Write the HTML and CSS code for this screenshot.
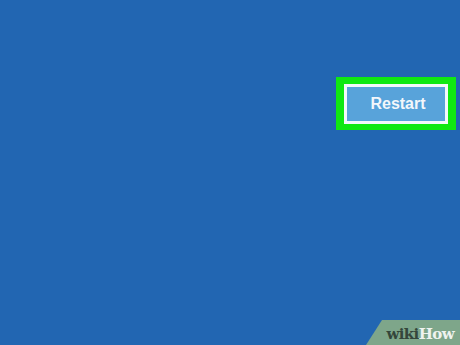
FILE: index.html
```html
<!DOCTYPE html>
<html>
<head>
<meta charset="utf-8">
<link rel="stylesheet" href="styles.css">
</head>
<body>
<div class="screen">
  <div class="row">
    <div class="highlight">
      <div class="btn">Restart</div>
    </div>
  </div>
  <div class="wm"><span class="wiki">wiki</span><span class="how">How</span></div>
</div>
</body>
</html>
```
FILE: styles.css
```css
html, body { margin: 0; padding: 0; }
body { width: 460px; height: 345px; overflow: hidden; background: #2266b2; }
.screen { position: relative; width: 460px; height: 345px; background: #2266b2; }
.row { display: flex; justify-content: flex-end; padding-top: 77px; padding-right: 4px; }
.highlight {
  width: 120px; height: 53px; box-sizing: border-box;
  background: #10e812; padding: 7px 8px 6px 8px;
}
.btn {
  height: 100%; box-sizing: border-box;
  border: 3px solid #f4f8fb; background: #58a3da;
  display: flex; align-items: center; justify-content: center;
  color: #f3f7fb; font-family: "Liberation Sans", Arial, sans-serif;
  font-weight: bold; font-size: 16px; padding-left: 4px;
}
.wm {
  position: absolute; left: 366px; top: 320px; width: 94px; height: 25px;
  background: #7ea68a;
  clip-path: polygon(16px 0, 94px 0, 94px 25px, 0 25px);
  display: flex; align-items: center; justify-content: flex-end; padding-right: 6px; padding-top: 3px; box-sizing: border-box;
  font-family: "DejaVu Serif", serif; font-weight: bold; font-size: 15px; letter-spacing: -0.6px;
}
.wiki { color: #34463a; }
.how { color: #eef3ef; }
```
